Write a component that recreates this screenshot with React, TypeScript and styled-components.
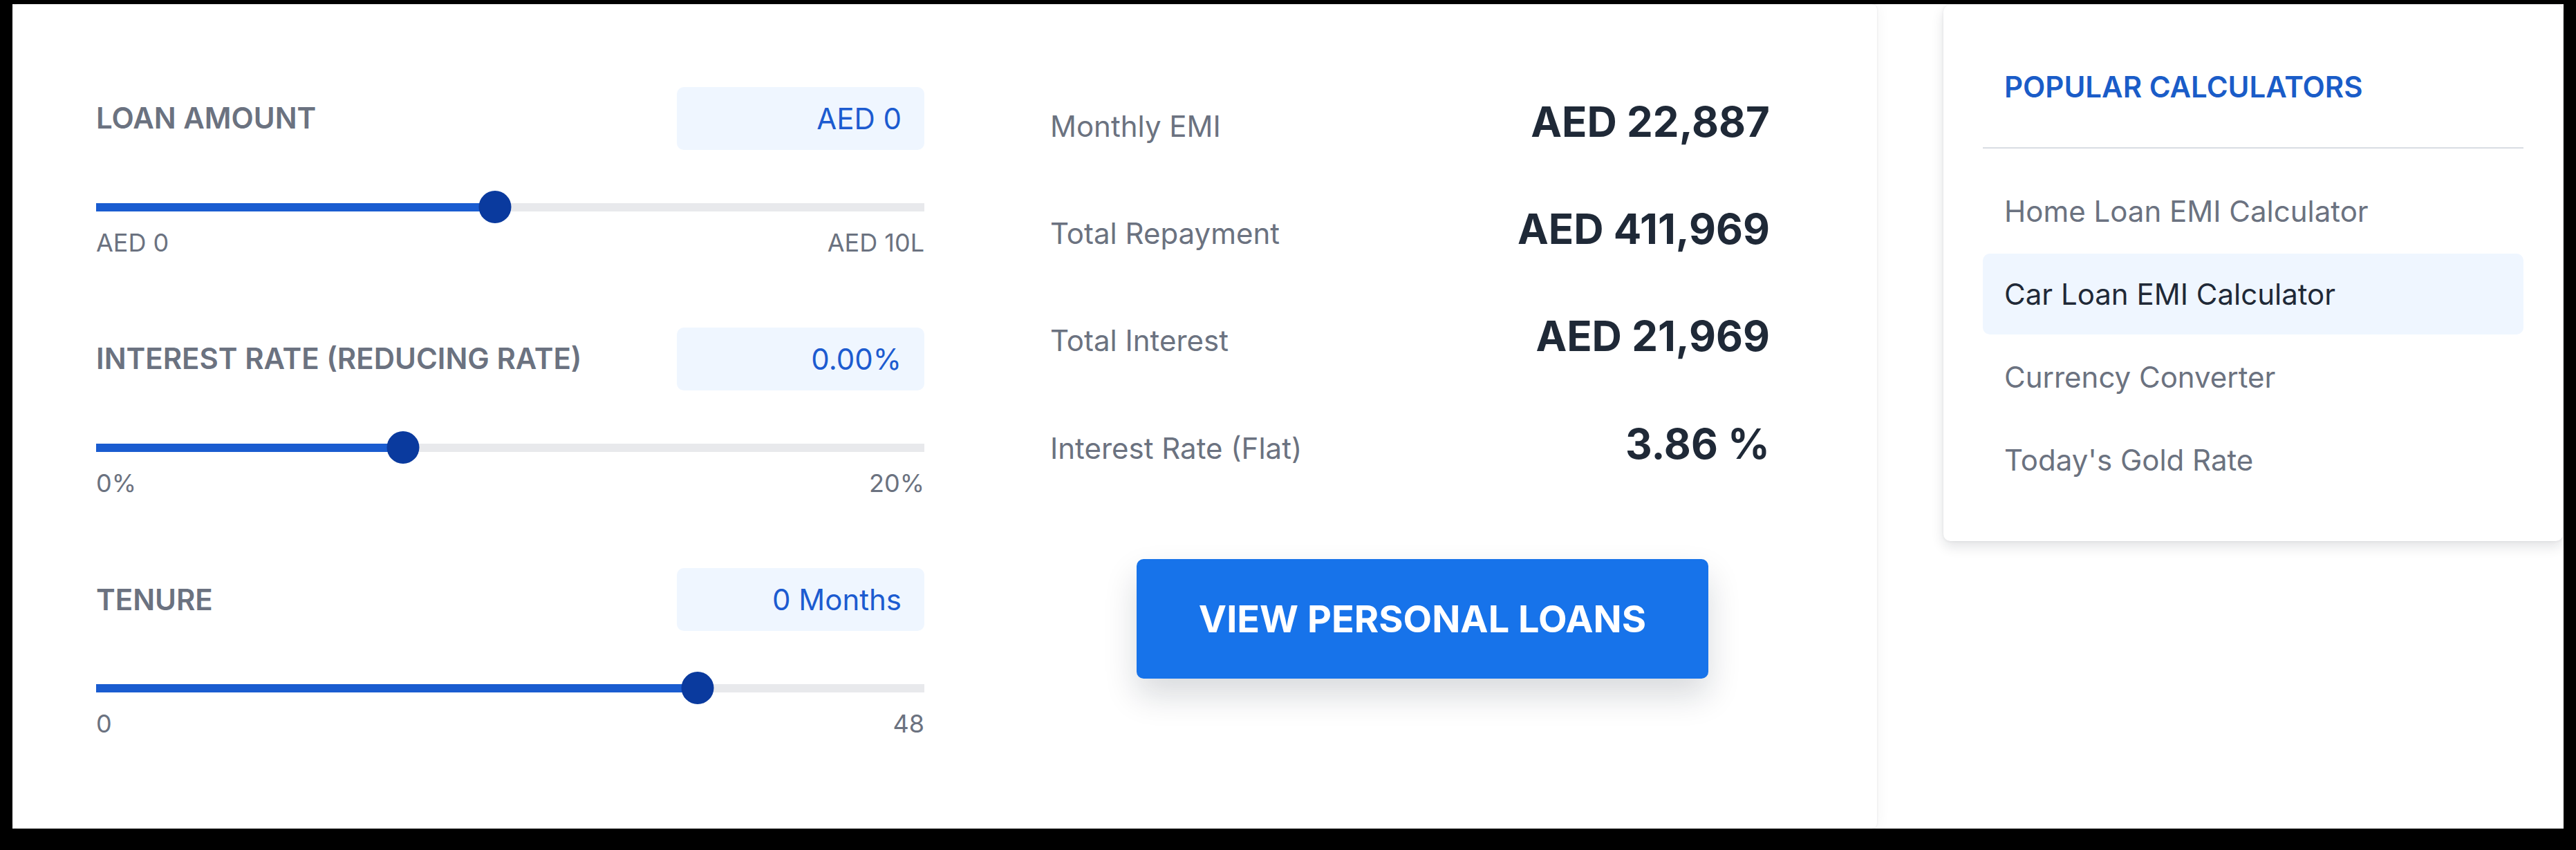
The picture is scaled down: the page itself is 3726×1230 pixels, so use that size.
import styled, { createGlobalStyle } from 'styled-components';

const GlobalStyle = createGlobalStyle`
  html, body {
    margin: 0;
    padding: 0;
    background: #000;
  }
  body {
    font-family: Inter, 'Noto Sans', 'Liberation Sans', sans-serif;
    -webkit-font-smoothing: antialiased;
  }
  * {
    box-sizing: border-box;
  }
`;

const Page = styled.div`
  display: flex;
  align-items: flex-start;
  gap: 96px;
  width: 3690px;
  height: 1193px;
  margin: 6px 18px 0 18px;
  background: #ffffff;
  overflow: hidden;
`;

const CalculatorCard = styled.section`
  display: grid;
  grid-template-columns: 1198px 1077px;
  column-gap: 182px;
  align-items: start;
  width: 2697px;
  height: 1193px;
  flex-shrink: 0;
  padding: 120px 0 0 121px;
  background: #ffffff;
  border-radius: 8px;
  box-shadow: 0 0 3px rgba(15, 23, 42, 0.1), 0 0 22px rgba(15, 23, 42, 0.05);
`;

const InputsColumn = styled.div`
  display: flex;
  flex-direction: column;
  gap: 101px;
`;

const Field = styled.div`
  display: flex;
  flex-direction: column;
`;

const FieldHeader = styled.div`
  display: flex;
  align-items: center;
  justify-content: space-between;
  height: 91px;
`;

const FieldLabel = styled.span`
  font-size: 42px;
  font-weight: 600;
  color: #6b7280;
  line-height: 1.2;
`;

const ValueBox = styled.div`
  display: flex;
  align-items: center;
  justify-content: flex-end;
  width: 358px;
  height: 91px;
  padding: 0 33px;
  background: #eff6ff;
  border-radius: 10px;
  font-size: 42px;
  color: #1c5bd0;
`;

const Slider = styled.div`
  position: relative;
  height: 47px;
  margin-top: 59px;
`;

const Track = styled.div`
  position: absolute;
  left: 0;
  right: 0;
  top: 18px;
  height: 12px;
  background: #e8e9ec;
`;

const TrackFill = styled.div`
  height: 100%;
  background: #1a5cd0;
`;

const Thumb = styled.div`
  position: absolute;
  top: 0;
  width: 47px;
  height: 47px;
  border-radius: 50%;
  background: #0a3a9e;
  transform: translateX(-50%);
`;

const RangeLabels = styled.div`
  display: flex;
  justify-content: space-between;
  margin-top: 7px;
  font-size: 36px;
  line-height: 1.2;
  color: #6b7280;
`;

const ResultsColumn = styled.div`
  display: flex;
  flex-direction: column;
  align-items: stretch;
  padding-top: 14px;
`;

const ResultRow = styled.div`
  display: flex;
  align-items: baseline;
  justify-content: space-between;
  padding-right: 36px;
  margin-bottom: 82px;

  &:last-of-type {
    margin-bottom: 0;
  }
`;

const ResultLabel = styled.span`
  font-size: 42px;
  line-height: 1.25;
  color: #6b7280;
`;

const ResultValue = styled.span`
  font-size: 60px;
  font-weight: 700;
  line-height: 1.22;
  color: #1f2937;
`;

const PrimaryButton = styled.button`
  align-self: center;
  width: 827px;
  height: 173px;
  margin-top: 130px;
  border: none;
  border-radius: 10px;
  background: #1773ea;
  color: #ffffff;
  font-family: inherit;
  font-size: 54px;
  font-weight: 700;
  cursor: pointer;
  box-shadow: 0 24px 48px rgba(15, 23, 42, 0.16);
`;

const Sidebar = styled.aside`
  width: 896px;
  flex-shrink: 0;
  margin-top: 1px;
  padding: 94px 57px 59px;
  background: #ffffff;
  border-radius: 10px;
  box-shadow: 0 8px 18px rgba(15, 23, 42, 0.12), 0 0 4px rgba(15, 23, 42, 0.08);
`;

const SidebarTitle = styled.h3`
  margin: 0;
  padding: 0 31px;
  font-size: 42px;
  font-weight: 600;
  line-height: 1.2;
  color: #1a5cc8;
`;

const Divider = styled.hr`
  margin: 62px 0 32px;
  border: none;
  border-top: 2px solid #d9dde3;
`;

const LinkList = styled.ul`
  display: flex;
  flex-direction: column;
  gap: 3px;
  margin: 0;
  padding: 0;
  list-style: none;
`;

const LinkItem = styled.li<{ $active?: boolean }>`
  display: flex;
  align-items: center;
  height: 117px;
  padding: 0 31px;
  border-radius: 10px;
  font-size: 42px;
  color: ${({ $active }) => ($active ? '#1f2937' : '#6b7280')};
  background: ${({ $active }) => ($active ? '#eff6ff' : 'transparent')};
  cursor: pointer;
`;

interface SliderFieldProps {
  label: string;
  value: string;
  percent: number;
  min: string;
  max: string;
}

const SliderField = ({ label, value, percent, min, max }: SliderFieldProps) => (
  <Field>
    <FieldHeader>
      <FieldLabel>{label}</FieldLabel>
      <ValueBox>{value}</ValueBox>
    </FieldHeader>
    <Slider>
      <Track>
        <TrackFill style={{ width: `${percent}%` }} />
      </Track>
      <Thumb style={{ left: `${percent}%` }} />
    </Slider>
    <RangeLabels>
      <span>{min}</span>
      <span>{max}</span>
    </RangeLabels>
  </Field>
);

const fields: SliderFieldProps[] = [
  { label: 'LOAN AMOUNT', value: 'AED 0', percent: 48.2, min: 'AED 0', max: 'AED 10L' },
  { label: 'INTEREST RATE (REDUCING RATE)', value: '0.00%', percent: 37.1, min: '0%', max: '20%' },
  { label: 'TENURE', value: '0 Months', percent: 72.6, min: '0', max: '48' },
];

const results = [
  { label: 'Monthly EMI', value: 'AED 22,887' },
  { label: 'Total Repayment', value: 'AED 411,969' },
  { label: 'Total Interest', value: 'AED 21,969' },
  { label: 'Interest Rate (Flat)', value: '3.86 %' },
];

const calculators = [
  'Home Loan EMI Calculator',
  'Car Loan EMI Calculator',
  'Currency Converter',
  "Today's Gold Rate",
];

export default function App() {
  return (
    <>
      <GlobalStyle />
      <Page>
        <CalculatorCard>
          <InputsColumn>
            {fields.map((f) => (
              <SliderField key={f.label} {...f} />
            ))}
          </InputsColumn>
          <ResultsColumn>
            {results.map((r) => (
              <ResultRow key={r.label}>
                <ResultLabel>{r.label}</ResultLabel>
                <ResultValue>{r.value}</ResultValue>
              </ResultRow>
            ))}
            <PrimaryButton type="button">VIEW PERSONAL LOANS</PrimaryButton>
          </ResultsColumn>
        </CalculatorCard>
        <Sidebar>
          <SidebarTitle>POPULAR CALCULATORS</SidebarTitle>
          <Divider />
          <LinkList>
            {calculators.map((c) => (
              <LinkItem key={c} $active={c === 'Car Loan EMI Calculator'}>
                {c}
              </LinkItem>
            ))}
          </LinkList>
        </Sidebar>
      </Page>
    </>
  );
}
